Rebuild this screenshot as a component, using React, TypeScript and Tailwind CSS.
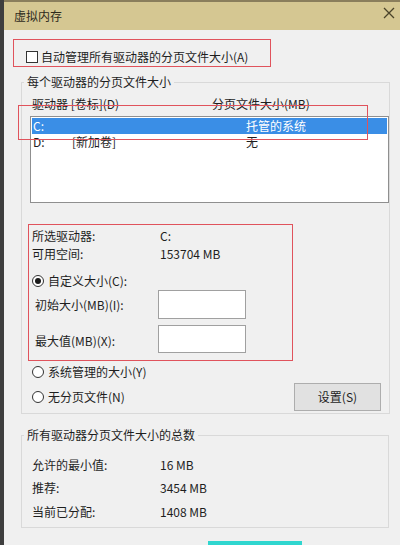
import React from 'react';

const font = { fontFamily: '"Noto Sans CJK SC", "Microsoft YaHei", sans-serif' };

function Radio({ checked, label }: { checked?: boolean; label: string }) {
  return (
    <div className="flex h-[16px] items-center">
      <span className="flex h-[12px] w-[12px] items-center justify-center rounded-full border border-[#333] bg-white">
        {checked && <span className="h-[6px] w-[6px] rounded-full bg-[#1a1a1a]" />}
      </span>
      <span className="ml-[4px] leading-[16px]">{label}</span>
    </div>
  );
}

function InfoRow({ label, value, className = '' }: { label: string; value: string; className?: string }) {
  return (
    <div className={`flex h-[16px] items-center leading-[16px] ${className}`}>
      <span className="w-[128px]">{label}</span>
      <span>{value}</span>
    </div>
  );
}

export default function App() {
  return (
    <div
      className="relative flex h-[545px] w-[400px] overflow-hidden bg-[#f0f0f0] text-[12px] text-[#1e1e1e]"
      style={font}
    >
      <div className="w-[4px] shrink-0 bg-[#3e3e3e]" />
      <div className="flex flex-1 flex-col">
        {/* title bar */}
        <div className="flex h-[30px] items-center justify-between border-t-2 border-[#8a7e5c] bg-[#d5c792] pl-[10px] pr-[4px]">
          <span className="leading-[16px] text-[#2e2a1c]">虚拟内存</span>
          <svg width="14" height="14" viewBox="0 0 14 14" className="mb-[6px]">
            <path d="M2 2 L12 12 M12 2 L2 12" stroke="#4a432a" strokeWidth="1.3" />
          </svg>
        </div>

        <div className="flex flex-col">
          {/* auto manage checkbox */}
          <div className="ml-[22px] mt-[20px] flex h-[14px] items-center">
            <span className="h-[12px] w-[12px] border border-[#333] bg-white" />
            <span className="ml-[3px] leading-[16px]">自动管理所有驱动器的分页文件大小(A)</span>
          </div>

          {/* per-drive group */}
          <fieldset className="ml-[17px] mt-[10px] w-[368px] border border-[#d9d9d9] p-0">
            <legend className="ml-[2px] px-[3px] leading-[16px]">每个驱动器的分页文件大小</legend>
            <div className="flex flex-col pl-[8px] pb-[2px]">
              <div className="mt-[6px] flex h-[16px] items-center pl-[2px] leading-[16px]">
                <span className="w-[180px]">驱动器 [卷标](D)</span>
                <span>分页文件大小(MB)</span>
              </div>

              <div className="mt-[4px] h-[87px] w-[359px] border border-[#8f8f8f] bg-white p-[1px]">
                <div className="flex h-[16px] items-center bg-[#3a8ee6] pl-[1px] leading-[16px] text-white">
                  <span className="w-[213px]">C:</span>
                  <span>托管的系统</span>
                </div>
                <div className="flex h-[16px] items-center pl-[1px] leading-[16px]">
                  <span className="w-[39px]">D:</span>
                  <span className="w-[174px]">[新加卷]</span>
                  <span>无</span>
                </div>
              </div>

              <div className="pl-[2px]">
                <InfoRow label="所选驱动器:" value="C:" className="mt-[25px]" />
                <InfoRow label="可用空间:" value="153704 MB" className="mt-[2px]" />
                <div className="mt-[11px]">
                  <Radio checked label="自定义大小(C):" />
                </div>
                <div className="mt-[1px] flex h-[29px] items-center">
                  <span className="w-[126px] pl-[3px] leading-[16px]">初始大小(MB)(I):</span>
                  <div className="h-[29px] w-[88px] border border-[#a0a0a0] bg-white" />
                </div>
                <div className="mt-[6px] flex h-[28px] items-center">
                  <span className="w-[126px] pl-[3px] pt-[4px] leading-[16px]">最大值(MB)(X):</span>
                  <div className="h-[28px] w-[88px] border border-[#a0a0a0] bg-white" />
                </div>
                <div className="mt-[11px]">
                  <Radio label="系统管理的大小(Y)" />
                </div>
                <div className="mt-[3px] flex h-[28px] items-center justify-between pr-[8px]">
                  <Radio label="无分页文件(N)" />
                  <button className="h-[28px] w-[87px] border border-[#adadad] bg-[#e1e1e1] leading-[16px]">
                    设置(S)
                  </button>
                </div>
              </div>
            </div>
          </fieldset>

          {/* totals group */}
          <fieldset className="ml-[17px] mt-[13px] w-[368px] border border-[#d9d9d9] p-0">
            <legend className="ml-[2px] px-[3px] leading-[16px]">所有驱动器分页文件大小的总数</legend>
            <div className="flex flex-col pb-[7px] pl-[10px]">
              <InfoRow label="允许的最小值:" value="16 MB" className="mt-[14px]" />
              <InfoRow label="推荐:" value="3454 MB" className="mt-[7px]" />
              <InfoRow label="当前已分配:" value="1408 MB" className="mt-[8px]" />
            </div>
          </fieldset>

          {/* top edge of the OK button below */}
          <div className="ml-[204px] mt-[13px] h-[4px] w-[94px] bg-[#2fd6cf]" />
        </div>
      </div>

      {/* red annotation boxes */}
      <div className="absolute left-[13px] top-[39px] h-[28px] w-[258px] border border-[#e0535c]" />
      <div className="absolute left-[18px] top-[105px] h-[35px] w-[350px] border border-[#e0535c]" />
      <div className="absolute left-[28px] top-[224px] h-[137px] w-[265px] border border-[#e0535c]" />
    </div>
  );
}
